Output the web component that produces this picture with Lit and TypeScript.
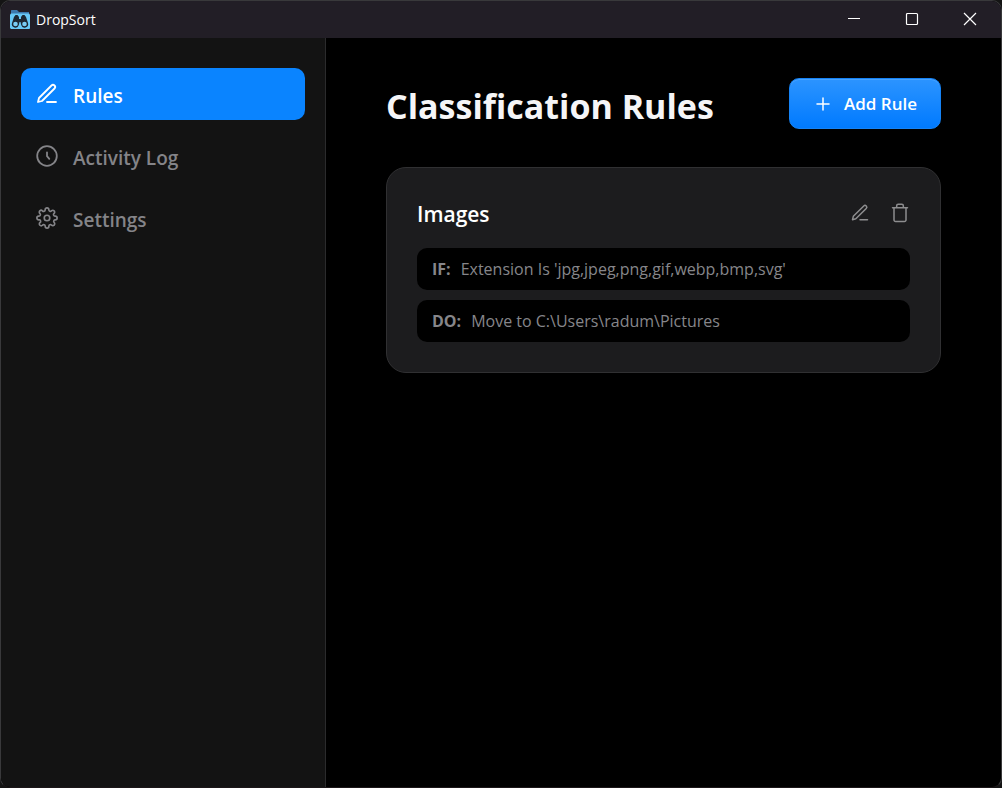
import { LitElement, html, css, svg } from "lit";
import { customElement, state } from "lit/decorators.js";
import { classMap } from "lit/directives/class-map.js";

const pen = svg`<path d="M12 20h9"/><path d="M16.5 3.5a2.12 2.12 0 0 1 3 3L7 19l-4 1 1-4z"/>`;
const clock = svg`<circle cx="12" cy="12" r="9.8"/><path d="M12 8.3v3.9l2.3 2.6"/>`;
const gear = svg`<g transform="translate(12 12) scale(.92) translate(-12 -12)"><circle cx="12" cy="12" r="3"/><path d="M19.4 15a1.65 1.65 0 0 0 .33 1.82l.06.06a2 2 0 1 1-2.83 2.83l-.06-.06a1.65 1.65 0 0 0-2.82 1.17V21a2 2 0 0 1-4 0v-.09a1.65 1.65 0 0 0-2.9-1.08l-.06.06a2 2 0 1 1-2.83-2.83l.06-.06A1.65 1.65 0 0 0 3.09 14H3a2 2 0 0 1 0-4h.09a1.65 1.65 0 0 0 1.17-2.9l-.06-.06a2 2 0 1 1 2.83-2.83l.06.06A1.65 1.65 0 0 0 10 3.09V3a2 2 0 0 1 4 0v.09a1.65 1.65 0 0 0 2.82 1.17l.06-.06a2 2 0 1 1 2.83 2.83l-.06.06A1.65 1.65 0 0 0 20.91 10H21a2 2 0 0 1 0 4h-.09a1.65 1.65 0 0 0-1.51 1z"/></g>`;
const trash = svg`<path d="M3 5.700h18M4.800 5.700v14.700a1.800 1.800 0 0 0 1.800 1.800h10.800a1.800 1.800 0 0 0 1.800-1.800V5.700M8 5.700V3.300a1.800 1.800 0 0 1 1.800-1.800h4.400a1.800 1.800 0 0 1 1.800 1.800v2.400"/>`;

@customElement("app-root")
export class AppRoot extends LitElement {
  static styles = css`
    :host { display: block; background: #141414; color: #f5f5f7; font-family: "Segoe UI", "Open Sans", "Noto Sans", sans-serif; }
    * { box-sizing: border-box; }
    button { font: inherit; border: 0; padding: 0; background: none; color: inherit; cursor: pointer; }
    h1, h2, p { margin: 0; }
    svg { display: block; fill: none; stroke: currentColor; stroke-width: 1.8; stroke-linecap: round; stroke-linejoin: round; flex: none; }
    .window { min-height: 100vh; display: flex; flex-direction: column; border: 1px solid #39393b; border-bottom-color: #1c1719; border-radius: 10px; overflow: hidden; background: #000; }
    .titlebar { height: 37px; display: flex; align-items: center; background: #221e26; color: #fff; padding: 0 2px 0 9px; }
    .logo { width: 20px; height: 20px; stroke: none; margin-right: 6px; }
    .app-name { flex: 1; font-size: 14px; line-height: 20px; }
    .caption { width: 58px; height: 37px; display: grid; place-items: center; padding-bottom: 2px; }
    .caption svg { width: 14px; height: 14px; stroke-width: 1.2; stroke-linecap: butt; stroke-linejoin: miter; }
    .body { flex: 1; display: flex; }
    .sidebar { width: 325px; flex: none; background: #131313; border-right: 1px solid #2b2b2c; padding: 30px 20px; display: flex; flex-direction: column; gap: 10px; }
    .nav { height: 52px; display: flex; align-items: center; gap: 14px; padding: 4px 14px 0; border-radius: 10px; color: #848488; font-size: 19px; line-height: 26px; font-weight: 600; text-align: left; }
    .nav svg { width: 24px; height: 24px; margin-bottom: 4px; }
    .nav.active { background: #0a84ff; color: #fff; }
    .main { flex: 1; min-width: 0; padding: 40px 60px; }
    .head { display: flex; align-items: center; justify-content: space-between; margin-bottom: 38px; }
    h1 { font-size: 34px; line-height: 45px; font-weight: 700; padding-top: 6px; }
    .add { height: 51px; display: flex; align-items: center; gap: 12px; padding: 1px 23px 0 24px; border-radius: 10px; color: #fff; background: linear-gradient(#2c94ff, #007aff); border: 1px solid #1683f5; box-shadow: inset 0 1px 0 #47a2ff; font-size: 17px; line-height: 24px; font-weight: 600; }
    .add svg { width: 18px; height: 18px; stroke-width: 1.5; margin-bottom: 1px; }
    .card { background: #1c1c1e; border: 1px solid #303032; border-radius: 20px; padding: 30px; display: flex; flex-direction: column; gap: 10px; }
    .card-head { display: flex; align-items: center; justify-content: space-between; height: 40px; padding-bottom: 8px; }
    h2 { font-size: 21px; line-height: 32px; font-weight: 600; color: #fff; }
    .tools { display: flex; gap: 20px; color: #8d8d8f; padding-bottom: 3px; }
    .tools svg { width: 20px; height: 20px; }
    .line { display: flex; gap: 10px; padding: 11px 15px; border-radius: 10px; background: #000; color: #86868a; font-size: 16px; line-height: 20px; }
    .line strong { font-weight: 700; }
  `;

  @state() private page = "Rules";

  private nav = [
    { name: "Rules", icon: pen },
    { name: "Activity Log", icon: clock },
    { name: "Settings", icon: gear },
  ];

  render() {
    return html`<div class="window">
      <header class="titlebar">
        <svg class="logo" viewBox="0 0 20 20" aria-hidden="true">
          <path fill="#3c78ad" d="M1.500 0h5.500l2 2h10v5H1V.5z"/>
          <path fill="#68c8f6" d="M1 3.500h18l1 1V18l-.5 1H1l-1-1V4.500z"/>
          <path fill="#1d2733" d="M5.500 5h2L9 7v2h2V7l1.500-2h2L16 7l2 6a3.500 3.500 0 1 1-6.800 2l-.7-3h-1l-.7 3A3.500 3.500 0 1 1 2 13l2-6z"/>
          <circle cx="5.500" cy="14" r="2.300" fill="#7acbf3"/><circle cx="14.500" cy="14" r="2.300" fill="#7acbf3"/>
        </svg>
        <span class="app-name">DropSort</span>
        <button class="caption" aria-label="Minimize"><svg viewBox="0 0 14 14"><path d="M1 6.500h12"/></svg></button>
        <button class="caption" aria-label="Maximize"><svg viewBox="0 0 14 14"><rect x="1.500" y="1.500" width="11" height="11" rx="1"/></svg></button>
        <button class="caption" aria-label="Close"><svg viewBox="0 0 14 14"><path d="m1 1 12 12M13 1 1 13"/></svg></button>
      </header>
      <div class="body">
        <nav class="sidebar">
          ${this.nav.map((n) => html`<button class=${classMap({ nav: true, active: n.name === this.page })} @click=${() => (this.page = n.name)}>
            <svg viewBox="0 0 24 24" aria-hidden="true">${n.icon}</svg>${n.name}</button>`)}
        </nav>
        <main class="main">
          <div class="head">
            <h1>Classification Rules</h1>
            <button class="add"><svg viewBox="0 0 18 18" aria-hidden="true"><path d="M9 3v12M3 9h12"/></svg>Add Rule</button>
          </div>
          <section class="card">
            <div class="card-head">
              <h2>Images</h2>
              <div class="tools">
                <button aria-label="Edit rule"><svg viewBox="0 0 24 24">${pen}</svg></button>
                <button aria-label="Delete rule"><svg viewBox="0 0 24 24">${trash}</svg></button>
              </div>
            </div>
            <p class="line"><strong>IF:</strong><span>Extension Is 'jpg,jpeg,png,gif,webp,bmp,svg'</span></p>
            <p class="line"><strong>DO:</strong><span>Move to C:\\Users\\radum\\Pictures</span></p>
          </section>
        </main>
      </div>
    </div>`;
  }
}
